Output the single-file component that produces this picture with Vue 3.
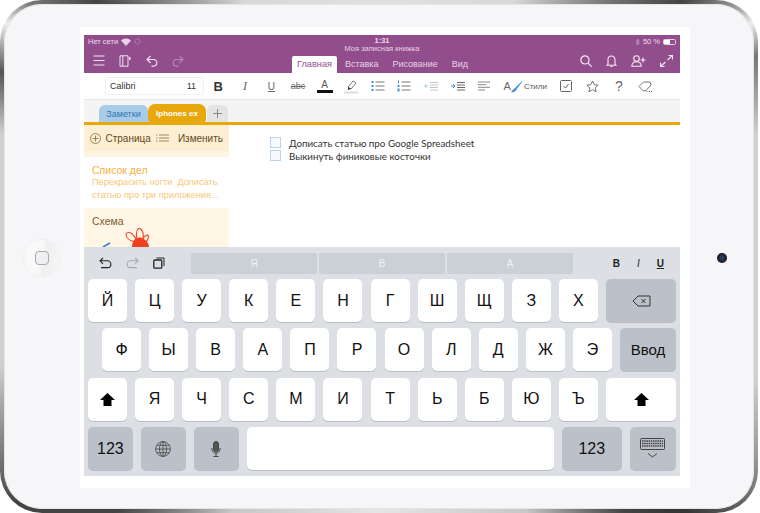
<template>
  <div class="ipad">
    <div class="bezel">
      <div class="side-left">
        <div class="home-btn"><div class="home-square"></div></div>
      </div>
      <div class="screen">
        <div class="app">
          <header class="header">
            <div class="status">
              <div class="status-left">
                <span>Нет сети</span>
                <svg width="10" height="8" viewBox="0 0 10 8"><path d="M0 2.600a7 7 0 0 1 10 0L5 8z" fill="#e6d3e4"/></svg>
                <svg width="7" height="7" viewBox="0 0 7 7"><circle cx="3.500" cy="3.500" r="2.500" fill="none" stroke="#c59ec1" stroke-width="1" stroke-dasharray="1 .8"/></svg>
              </div>
              <span class="clock">1:31</span>
              <div class="status-right">
                <svg width="5" height="8" viewBox="0 0 5 8"><path d="M.5 2l4 3.500L2.500 7V1l2 2-4 3" fill="none" stroke="#c59ec1" stroke-width=".7"/></svg>
                <span>50 %</span>
                <div class="battery"><div class="battery-fill"></div></div>
              </div>
            </div>
            <div class="book-title">Моя записная книжка</div>
            <div class="head-row">
              <div class="head-icons left">
                <svg width="12" height="11" viewBox="0 0 12 11"><path d="M.5 1h11M.5 5.500h11M.5 10h11" stroke="#f0e3ef" stroke-width="1.100"/></svg>
                <svg width="12" height="12" viewBox="0 0 12 12" fill="none" stroke="#f0e3ef"><path d="M1 .8h8v10.400H1zM3.800 .8v10.400"/><path d="M10 2h1.500v3H10z" fill="#f0e3ef" stroke="none"/></svg>
                <svg width="12" height="12" viewBox="0 0 12 12" fill="none" stroke="#f0e3ef" stroke-width="1.100"><path d="M4.500 1L1 4.500 4.500 8M1 4.500h6.500a3.300 3.300 0 0 1 0 6.600H5.500"/></svg>
                <svg width="12" height="12" viewBox="0 0 12 12" fill="none" stroke="#b78ab3" stroke-width="1.100"><path d="M7.500 1L11 4.500 7.500 8M11 4.500H4.500a3.300 3.300 0 0 0 0 6.600h2"/></svg>
              </div>
              <nav class="tabs">
                <span v-for="t in ribbonTabs" :key="t" class="tab" :class="{ active: t === 'Главная' }">{{ t }}</span>
              </nav>
              <div class="head-icons right">
                <svg width="12" height="12" viewBox="0 0 12 12" fill="none" stroke="#f5ebf4" stroke-width="1.200"><circle cx="4.900" cy="4.900" r="4.100"/><path d="M7.900 7.900L11.700 11.700"/></svg>
                <svg width="11" height="12" viewBox="0 0 11 12" fill="none" stroke="#f5ebf4" stroke-width="1.100"><path d="M2 9.500V4.500a3.500 3.500 0 0 1 7 0v5l1 .8H1zM4.500 11.500h2"/></svg>
                <svg width="15" height="12" viewBox="0 0 15 12" fill="none" stroke="#f5ebf4" stroke-width="1.100"><circle cx="5.500" cy="3.500" r="2.800"/><path d="M.8 11.300c0-3 2-4.600 4.700-4.600s4.700 1.600 4.700 4.600zM12 2.500v5M9.500 5h5"/></svg>
                <svg width="13" height="12" viewBox="0 0 13 12" fill="none" stroke="#f5ebf4" stroke-width="1.100"><path d="M7.500 5L12.500.5M8.500.5h4v4M5.500 7L.5 11.500M.5 7.500v4h4"/></svg>
              </div>
            </div>
          </header>

          <div class="toolbar">
            <div class="font-box">
              <span>Calibri</span>
              <span>11</span>
            </div>
            <div class="tool"><b class="t-bold">B</b></div>
            <div class="tool"><i class="t-italic">I</i></div>
            <div class="tool"><u class="t-under">U</u></div>
            <div class="tool"><s class="t-strike">abc</s></div>
            <div class="tool color-a">
              <span>A</span>
              <div class="color-bar"></div>
            </div>
            <div class="tool">
              <svg width="16" height="16" viewBox="0 0 16 16"><path d="M5 9l5-6 3 2-5 6z" fill="none" stroke="#777"/><path d="M5 9l3 2-3 1z" fill="#333"/><path d="M1 14.500h14" stroke="#ddd" stroke-width="2"/></svg>
            </div>
            <div class="tool">
              <svg width="14" height="12" viewBox="0 0 14 12"><path d="M4.500 2h9M4.500 6h9M4.500 10h9" stroke="#777"/><path d="M.5 1h2v2h-2zM.5 5h2v2h-2zM.5 9h2v2h-2z" fill="#3d8fdc"/></svg>
            </div>
            <div class="tool">
              <svg width="14" height="12" viewBox="0 0 14 12"><path d="M4.500 2h9M4.500 6h9M4.500 10h9" stroke="#777"/><path d="M1 .5h1v3H1zM.5 5h2v2h-2zM.5 8.500h2v3h-2z" fill="#3d8fdc"/></svg>
            </div>
            <div class="tool">
              <svg width="14" height="11" viewBox="0 0 14 11"><path d="M6 1.500h8M6 4h8M6 6.500h8M6 9h8" stroke="#c4c4c4"/><path d="M4 5H.8M2.500 3L.6 5l1.900 2" fill="none" stroke="#a9cdee"/></svg>
            </div>
            <div class="tool">
              <svg width="14" height="11" viewBox="0 0 14 11"><path d="M6 1.500h8M6 4h8M6 6.500h8M6 9h8" stroke="#666"/><path d="M0 5h3.500M2 3l2 2-2 2" fill="none" stroke="#3d8fdc"/></svg>
            </div>
            <div class="tool">
              <svg width="12" height="10" viewBox="0 0 12 10"><path d="M0 1h12M0 3.700h8M0 6.300h12M0 9h7" stroke="#888"/></svg>
            </div>
            <div class="tool styles">
              <span class="styles-a">A</span>
              <svg width="12" height="13" viewBox="0 0 12 13"><path d="M11 1L4 8l1 2 6-8z" fill="#3d8fdc"/><path d="M4 8l1.500 1.500C4.500 12 2 12.500 0 12c1.500-1 2-3 4-4z" fill="#3d8fdc"/></svg>
              <span class="styles-label">Стили</span>
            </div>
            <div class="tool">
              <svg width="12" height="12" viewBox="0 0 12 12" fill="none" stroke="#666"><rect x=".5" y=".5" width="11" height="11" rx="1"/><path d="M3.500 6l2 2 3-4"/></svg>
            </div>
            <div class="tool">
              <svg width="13" height="13" viewBox="0 0 13 13"><path d="M6.500 1l1.700 3.700 4 .4-3 2.700.9 4-3.600-2.100-3.600 2.100.9-4-3-2.700 4-.4z" fill="none" stroke="#666" stroke-width=".9"/></svg>
            </div>
            <div class="tool"><span class="t-help">?</span></div>
            <div class="tool">
              <svg width="15" height="13" viewBox="0 0 15 13" fill="none" stroke="#777"><path d="M1 6.500L5.500 2H12l1 3-5 5.500-2.500.5z"/><path d="M8.500 11.500h1M11 11.500h1M13 11.500h1" stroke="#555"/></svg>
            </div>
          </div>

          <div class="notebook-tabs">
            <div class="nb-tab blue">Заметки</div>
            <div class="nb-tab orange">Iphones ex</div>
            <div class="nb-tab plus">
              <svg width="9" height="9" viewBox="0 0 9 9"><path d="M4.500 0v9M0 4.500h9" stroke="#888"/></svg>
            </div>
          </div>

          <div class="main">
            <aside class="sidebar">
              <div class="side-head">
                <svg width="11" height="11" viewBox="0 0 11 11" fill="none" stroke="#8a6a3c" stroke-width=".8"><circle cx="5.500" cy="5.500" r="5"/><path d="M5.500 2.500v6M2.500 5.500h6"/></svg>
                <span class="page-btn">Страница</span>
                <svg class="list-ic" width="13" height="8" viewBox="0 0 13 8"><path d="M3 1h10M3 4h10M3 7h10" stroke="#8a6a3c" stroke-width=".8"/><path d="M0 1h1.500M0 4h1.500M0 7h1.500" stroke="#8a6a3c" stroke-width=".8"/></svg>
                <span class="edit-btn">Изменить</span>
              </div>
              <div class="side-gap"></div>
              <div class="page-item">
                <div class="page-title">Список дел</div>
                <div class="page-text">Перекрасить ногти&nbsp; Дописать</div>
                <div class="page-text">статью про три приложения...</div>
              </div>
              <div class="page-item current">
                <div class="page-title">Схема</div>
                <svg class="doodle" width="100" height="20" viewBox="0 0 100 20">
                  <path d="M19 19l7-4" stroke="#2f7ce0" stroke-width="1.500" fill="none"/>
                  <path d="M51 14C46 13 42 10 42 6c2-3 6-1 8 2 2 2 3 4 3 6M53 10c-1-4-1-8 2-10 3 1 5 5 4 10M59 11c1-2 3-4 5-4 1 3 0 5-2 7" fill="none" stroke="#f0401f" stroke-width="1.100"/>
                  <path d="M48 19c0-4 2-9 6-9 2-1 4 0 6 1 3 2 5 5 5 8z" fill="#f0401f"/>
                </svg>
              </div>
            </aside>
            <section class="note">
              <div v-for="todo in todos" :key="todo" class="todo">
                <span class="check"></span>
                <span>{{ todo }}</span>
              </div>
            </section>
          </div>

          <div class="keyboard">
            <div class="kb-top">
              <div class="kb-actions">
                <svg width="13" height="12" viewBox="0 0 13 12" fill="none" stroke="#222" stroke-width="1.100"><path d="M4 .8L1 3.800 4 6.800M1 3.800h7.500a3.400 3.400 0 0 1 0 6.800H2"/></svg>
                <svg width="13" height="12" viewBox="0 0 13 12" fill="none" stroke="#a5a9ae" stroke-width="1.100"><path d="M9 .8l3 3-3 3M12 3.800H4.500a3.400 3.400 0 0 0 0 6.800H11"/></svg>
                <svg width="12" height="12" viewBox="0 0 12 12" fill="none" stroke="#222"><rect x=".8" y="3" width="8" height="8.200" rx="1" stroke-width="1.300"/><path d="M3.500 1h7.500v8"/></svg>
              </div>
              <div class="suggests">
                <div v-for="s in suggestions" :key="s" class="suggest">{{ s }}</div>
              </div>
              <div class="kb-format">
                <b>B</b>
                <i>I</i>
                <u>U</u>
              </div>
            </div>

            <div class="kb-row">
              <div v-for="k in row1" :key="k" class="key">{{ k }}</div>
              <div class="key dark grow">
                <svg width="19" height="12" viewBox="0 0 19 12" fill="none" stroke="#333"><path d="M6 1h12v10H6L1 6z"/><path d="M9.500 4l4 4M13.500 4l-4 4"/></svg>
              </div>
            </div>
            <div class="kb-row indent">
              <div v-for="k in row2" :key="k" class="key">{{ k }}</div>
              <div class="key dark grow enter">Ввод</div>
            </div>
            <div class="kb-row">
              <div class="key">
                <svg width="15" height="13" viewBox="0 0 15 13"><path d="M7.500 0L15 7h-3.500v6h-8V7H0z" fill="#000"/></svg>
              </div>
              <div v-for="k in row3" :key="k" class="key">{{ k }}</div>
              <div class="key grow">
                <svg width="15" height="13" viewBox="0 0 15 13"><path d="M7.500 0L15 7h-3.500v6h-8V7H0z" fill="#000"/></svg>
              </div>
            </div>
            <div class="kb-row">
              <div class="key dark w-mod">123</div>
              <div class="key dark w-mod">
                <svg width="16" height="16" viewBox="0 0 16 16" fill="none" stroke="#444" stroke-width=".8"><circle cx="8" cy="8" r="7.400"/><ellipse cx="8" cy="8" rx="3.500" ry="7.400"/><path d="M8 .6v14.800M.6 8h14.800M1.800 4.300h12.400M1.800 11.700h12.400"/></svg>
              </div>
              <div class="key dark w-mod">
                <svg width="10" height="16" viewBox="0 0 10 16" fill="none" stroke="#444"><rect x="2.500" y=".5" width="5" height="10" rx="2.500" fill="#555"/><path d="M.8 7c0 3 1.700 5 4.200 5s4.200-2 4.200-5M5 12v3M2.500 15.500h5"/></svg>
              </div>
              <div class="key space"></div>
              <div class="key dark w-num">123</div>
              <div class="key dark grow">
                <svg width="25" height="21" viewBox="0 0 25 21" fill="none" stroke="#444"><rect x=".5" y=".5" width="24" height="11" rx="1"/><path d="M2 3h21M2 5.500h21M2 8h21" stroke-dasharray="1.500 .7" stroke-width="1.300"/><path d="M8 15.500l4.500 3.500 4.500-3.500"/></svg>
              </div>
            </div>
          </div>
        </div>
      </div>
      <div class="side-right">
        <div class="camera"></div>
      </div>
    </div>
  </div>
</template>

<script setup>
const ribbonTabs = ['Главная', 'Вставка', 'Рисование', 'Вид']
const todos = ['Дописать статью про Google Spreadsheet', 'Выкинуть финиковые косточки']
const suggestions = ['Я', 'В', 'А']
const row1 = ['Й', 'Ц', 'У', 'К', 'Е', 'Н', 'Г', 'Ш', 'Щ', 'З', 'Х']
const row2 = ['Ф', 'Ы', 'В', 'А', 'П', 'Р', 'О', 'Л', 'Д', 'Ж', 'Э']
const row3 = ['Я', 'Ч', 'С', 'М', 'И', 'Т', 'Ь', 'Б', 'Ю', 'Ъ']
</script>

<style>
html, body { margin: 0; background: #fff; }
</style>

<style scoped>
* { box-sizing: border-box; }

/* Frame */
.ipad {
  width: 758px; height: 513px; padding: 4px; border-radius: 42px;
  font-family: "Liberation Sans", Arial, sans-serif;
  background: conic-gradient(from 0deg at 50% 50%,
    #e0e0e0 0deg, #d8d8d8 28deg, #777 42deg, #444 50deg, #999 55deg, #eee 58deg, #777 62deg, #d0d0d0 72deg,
    #d0d0d0 108deg, #999 118deg, #666 124deg, #333 130deg, #444 136deg, #c8c8c8 150deg, #e6e6e6 180deg,
    #c8c8c8 210deg, #444 226deg, #444 236deg, #777 242deg, #d0d0d0 254deg,
    #d0d0d0 288deg, #555 296deg, #eee 302deg, #777 306deg, #444 312deg, #777 318deg, #d8d8d8 332deg, #e0e0e0 360deg);
}
.bezel { display: flex; height: 505px; background: #f6f6f8; border-radius: 38px; box-shadow: inset 0 0 0 1px #e4e4e6; padding: 23px 0 21px; }
.side-left { width: 76px; display: flex; align-items: center; justify-content: center; }
.side-right { flex: 1; display: flex; align-items: center; justify-content: center; }
.home-btn { width: 38px; height: 38px; border-radius: 50%; background: linear-gradient(100deg, #f9f9fa 45%, #efeff1 60%, #f7f7f8); display: flex; align-items: center; justify-content: center; border: 1px solid #f0f0f2; }
.home-square { width: 14px; height: 14px; border: 1.500px solid #a9a9ac; border-radius: 4px; background: #f0f0f2; }
.camera { width: 10px; height: 10px; border-radius: 50%; background: radial-gradient(circle, #2a3a5c 20%, #12141a 70%); }
.screen { width: 610px; height: 461px; background: #fff; padding: 8px 10px 11px 4px; }
.app { height: 441px; display: flex; flex-direction: column; overflow: hidden; }

/* Header */
.header { height: 38px; flex: none; background: #924e8c; color: #f3e7f2; }
.status { height: 11px; padding: 2px 4px 0 4px; display: grid; grid-template-columns: 1fr auto 1fr; font-size: 7.500px; line-height: 8px; color: #ecdceb; }
.status-left, .status-right { display: flex; align-items: center; gap: 3px; }
.status-right { justify-content: flex-end; }
.clock { font-weight: bold; }
.battery { width: 13px; height: 6px; border: 0.500px solid #e6d3e4; border-radius: 1.500px; }
.battery-fill { width: 50%; height: 100%; background: #fff; }
.book-title { height: 7px; text-align: center; font-size: 7.500px; line-height: 6px; color: #e6d3e4; }
.head-row { height: 20px; display: flex; padding-left: 8.500px; }
.head-icons { display: flex; align-items: flex-start; padding-top: 2px; }
.head-icons.left { gap: 14.500px; width: 199.500px; }
.head-icons.right { margin-left: auto; padding-right: 7px; gap: 14px; }
.tabs { display: flex; align-items: flex-end; gap: 14px; }
.tab { height: 17px; line-height: 17px; font-size: 9px; color: #e6d3e4; }
.tab.active { background: #fff; color: #924e8c; border-radius: 2px 2px 0 0; padding: 0 5px; margin-right: -6px; font-size: 9.200px; }

/* Ribbon */
.toolbar { height: 27px; flex: none; background: #fff; border-bottom: 1px solid #e6e6e6; display: flex; align-items: center; padding-left: 21px; }
.font-box { width: 99px; height: 18px; border: 1px solid #f0f0f0; border-radius: 2px; display: flex; justify-content: space-between; align-items: center; padding: 0 7px 0 4px; font-size: 9px; color: #333; margin-right: 1px; }
.tool { width: 26.600px; flex: none; height: 18px; display: flex; align-items: center; justify-content: center; color: #666; }
.t-bold { font-size: 13px; color: #333; }
.t-italic { font-family: "Liberation Serif", serif; font-size: 12px; }
.t-under { font-size: 10px; font-weight: normal; }
.t-strike { font-size: 9px; }
.color-a { flex-direction: column; font-size: 10px; line-height: 11px; color: #555; }
.color-bar { width: 16px; height: 3px; background: #111; }
.styles { width: 55px; gap: 0; justify-content: flex-start; padding-left: 6px; }
.styles-a { font-size: 11px; color: #666; }
.styles-label { font-size: 8px; margin-left: 1px; color: #555; }
.t-help { font-size: 14px; color: #666; }

/* Section tabs */
.notebook-tabs { height: 22px; flex: none; background: #f4f4f4; display: flex; align-items: flex-end; padding-left: 15px; }
.nb-tab { height: 17px; font-size: 9px; display: flex; align-items: center; justify-content: center; border-radius: 6px 6px 0 0; }
.nb-tab.blue { width: 49px; background: #a8cbe8; color: #2f76b5; }
.nb-tab.orange { width: 58px; height: 18px; background: #e8a80c; color: #fff; font-size: 8px; font-weight: bold; border-radius: 7px 7px 2px 2px; }
.nb-tab.plus { width: 21px; background: #e4e4e4; margin-left: 1px; }

.main { flex: 1; min-height: 0; display: flex; border-top: 3px solid #e8a80c; }
.sidebar { width: 145px; flex: none; overflow: hidden; }
.side-head { height: 26px; background: #fcefd3; display: flex; align-items: center; padding: 0 6px; font-size: 10px; color: #664820; }
.page-btn { margin-left: 4.500px; }
.list-ic { margin-left: 5px; }
.edit-btn { margin-left: auto; }
.side-gap { height: 6px; background: #fdf5e4; }
.page-item { height: 51px; padding: 6.500px 8px; background: #fff; }
.page-title { font-size: 10.500px; line-height: 12.500px; color: #f3b23c; }
.page-text { font-size: 9.200px; line-height: 12.800px; color: #f8c777; white-space: nowrap; }
.page-item.current { height: 40px; background: #fff6e6; padding: 7px 0 0; }
.page-item.current .page-title { color: #7c5c2c; padding-left: 8px; height: 13px; }
.doodle { display: block; }

.note { flex: 1; padding: 11px 0 0 41px; background: #fff; }
.todo { display: flex; align-items: center; height: 13px; font-family: Lato, "Noto Sans", sans-serif; font-size: 9.800px; color: #333; white-space: nowrap; }
.check { width: 11px; height: 11px; border: 1px solid #bcd3ea; background: #f6f9fd; margin-right: 8px; flex: none; }

/* Keyboard */
.keyboard { height: 229px; flex: none; background: #dcdfe3; padding: 0 4px; }
.kb-top { height: 32px; display: flex; align-items: center; }
.kb-actions { width: 103px; display: flex; align-items: center; gap: 14px; padding-left: 11px; }
.suggests { display: flex; gap: 2px; }
.suggest { width: 126px; height: 21px; background: #cbd0d7; border-radius: 2px; display: flex; align-items: center; justify-content: center; font-size: 10px; color: #f1f2f4; }
.kb-format { flex: 1; display: flex; justify-content: flex-end; gap: 17px; padding-right: 12px; font-size: 10px; color: #222; }
.kb-format u { font-weight: bold; }
.kb-row { display: flex; gap: 8.100px; height: 43px; margin-bottom: 6.400px; }
.kb-row.indent { padding-left: 14px; }
.key { width: 39px; flex: none; height: 43px; background: #fff; border-radius: 5px; box-shadow: 0 1px 0 #b9bcc1; display: flex; align-items: center; justify-content: center; font-size: 16px; color: #111; }
.key.dark { background: #bbc1c9; }
.key.grow { flex: 1; }
.key.enter { font-size: 15px; }
.key.w-mod { width: 44.800px; }
.key.space { width: 307px; }
.key.w-num { width: 60px; }
</style>
